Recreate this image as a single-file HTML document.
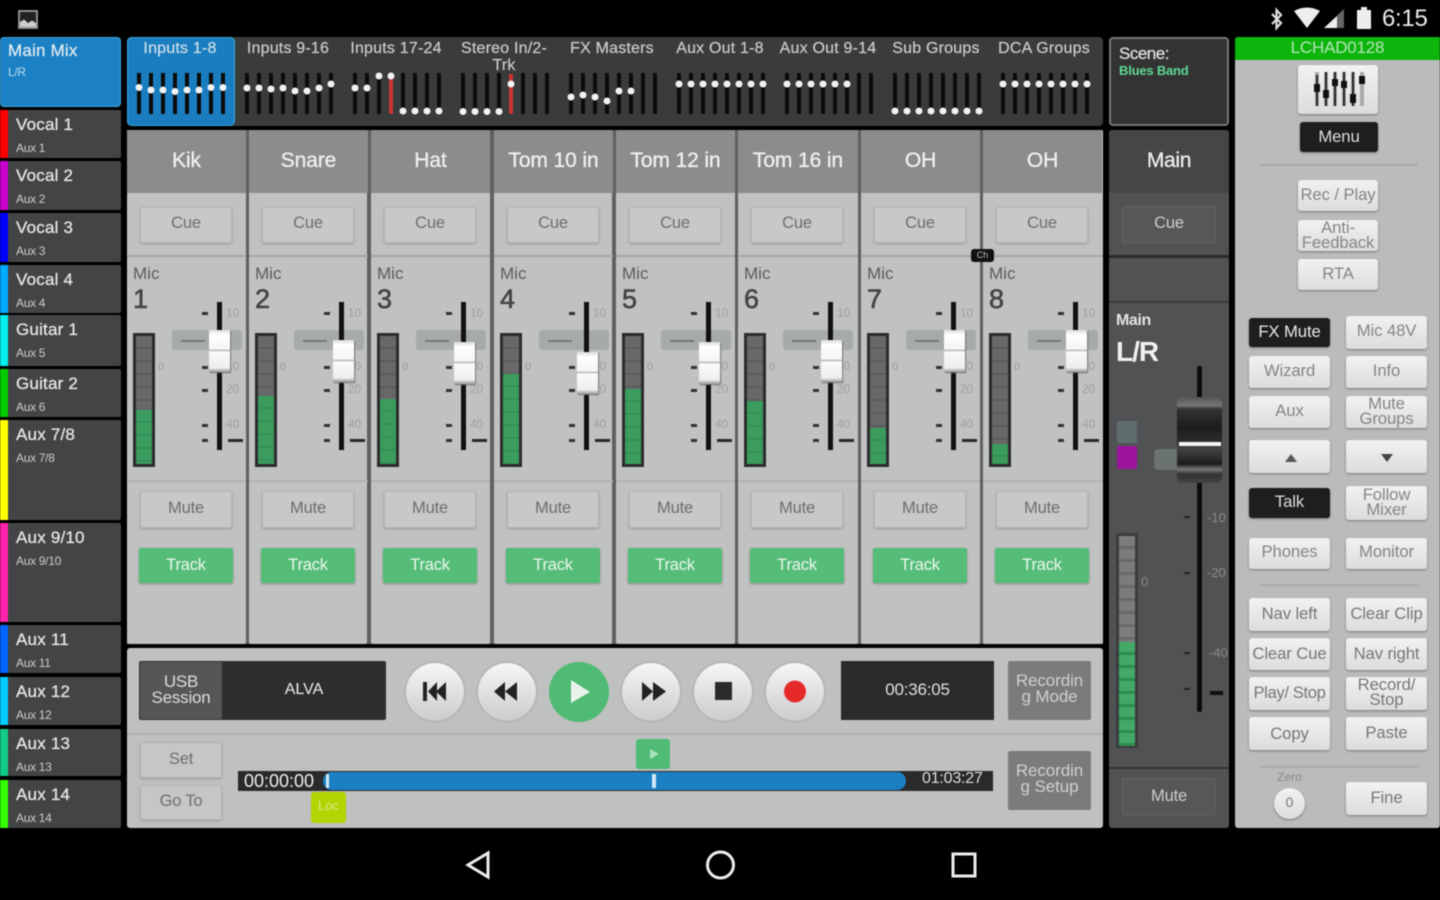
<!DOCTYPE html>
<html><head><meta charset="utf-8"><title>Mixer</title>
<style>
html,body{margin:0;padding:0;background:#000;width:1440px;height:900px;overflow:hidden}
#r{position:relative;width:1440px;height:900px;background:#000;overflow:hidden;font-family:"Liberation Sans",sans-serif;filter:blur(.6px)}
#r div,#r span,#r svg{position:absolute;box-sizing:border-box}
.s{left:0;width:121px;background:#434445;color:#ddd;border-radius:0 2px 2px 0}
.s i{position:absolute;left:0;top:0;bottom:0;width:8px}
.s b{position:absolute;left:16px;top:5px;font:17px/20px "Liberation Sans";letter-spacing:.2px;color:#e4e4e4;-webkit-text-stroke:.3px #e4e4e4;white-space:nowrap}
.s u{position:absolute;left:16px;top:31px;font:12px/14px "Liberation Sans";text-decoration:none;color:#ccc;letter-spacing:-.3px}
.t{top:40px;width:108px;text-align:center;font:16px/17px "Liberation Sans";letter-spacing:.2px;color:#ccc;white-space:nowrap;-webkit-text-stroke:.2px #ccc}
.ch{top:130px;width:119px;height:514px;background:#c0c1c1;border-radius:2px}
.hd{left:0;top:0;width:119px;height:63px;background:#8b8d8d;color:#f0f0f0;text-align:center;font:21px/62px "Liberation Sans";letter-spacing:-.1px;-webkit-text-stroke:.3px #f0f0f0;white-space:nowrap}
.b{text-align:center;color:#6e6e6e;font:16.5px/34px "Liberation Sans";background:#c8c8c8;border:1px solid #b4b4b4;border-radius:2px;box-shadow:0 1px 2px #999;letter-spacing:-.2px}
.cue{left:13px;top:77px;width:92px;height:36px;line-height:30px}
.mute{left:13px;top:361px;width:92px;height:37px;line-height:32px}
.trk{left:12px;top:418px;width:94px;height:35px;background:#55bd78;border:0;color:#ecf6ee;line-height:34px;box-shadow:0 1px 2px #888}
.ln{left:0;top:125px;width:119px;height:2px;background:#a4a5a5}
.ln2{left:0;top:350px;width:119px;height:2px;background:#b0b1b1}
.mic{left:6px;top:134px;font:17px/20px "Liberation Sans";color:#5c5c5c}
.num{left:6px;top:154px;font:27px/30px "Liberation Sans";color:#444;-webkit-text-stroke:.6px #444}
.mt{left:6px;top:203px;width:22px;height:134px;background:#2c2c2c;padding:0}
.mt i{position:absolute;left:3px;right:3px;top:3px;bottom:3px;background:repeating-linear-gradient(#686868 0 11px,#5c5c5c 11px 13px)}
.mt em{position:absolute;left:3px;right:3px;bottom:3px;background:repeating-linear-gradient(#3b9c5e 0 11px,#35905a 11px 13px)}
.z{left:31px;top:230px;font:11px/14px "Liberation Sans";color:#999}
.tk{left:75px;width:6px;height:3px;background:#333}
.l{left:99px;width:20px;text-align:left;font:12px/14px "Liberation Sans";color:#a0a0a0;letter-spacing:-.2px}
.dd{left:101px;top:309px;width:15px;height:3px;background:#2a2a2a}
.pill{left:45px;top:200px;width:70px;height:20px;background:#a6aaaa;border-radius:3px}
.dash{left:54px;top:210px;width:24px;height:2px;background:#777}
.tr{left:90px;top:172px;width:5px;height:148px;background:#111}
.cap{left:82px;width:21px;height:42px;background:linear-gradient(#ddd,#fff 12%,#f4f4f4 46%,#aaa 48%,#fafafa 52%,#eee 90%,#999);box-shadow:1px 1px 1px #777}
.rb{text-align:center;color:#858585;font:16.7px/30px "Liberation Sans";background:linear-gradient(#f2f2f2,#dcdcdc);border-radius:3px;box-shadow:0 1px 2px #777;letter-spacing:-.1px;white-space:nowrap}
.rb.k{background:#1e1e1e;color:#e8e8e8}
.rb.two{line-height:15px}
.c1{left:1249px;width:81px}.c2{left:1346px;width:81px}
.dv{left:1260px;width:158px;height:2px;background:#a8aaac}
.cr{top:663px;width:58px;height:58px;border-radius:50%;background:linear-gradient(#f6f6f6,#ccc);box-shadow:0 0 2px #888}
.rec{left:1008px;width:83px;height:59px;background:#7a7b7b;border-radius:2px;color:#cfcfcf;text-align:center;font:17px/16px "Liberation Sans";padding-top:12px;letter-spacing:-.1px}
</style></head><body><div id="r">

<!-- status bar -->
<svg style="left:18px;top:10px" width="20" height="19" viewBox="0 0 20 19"><rect x="1" y="1" width="18" height="17" fill="#222" stroke="#aaa" stroke-width="1.6"/><path d="M2 16V12L6 9.500L10 13L14 10.500L18 13V17H2Z" fill="#ccc"/></svg>
<svg style="left:1268px;top:7px" width="18" height="24" viewBox="0 0 18 24"><path d="M4 7L13 16L8.500 21V3L13 8L4 17" fill="none" stroke="#ddd" stroke-width="2.200"/></svg>
<svg style="left:1293px;top:7px" width="30" height="22" viewBox="0 0 30 22"><path d="M1 4Q14 -3 27 4L14 21Z" fill="#eee"/></svg>
<svg style="left:1323px;top:8px" width="23" height="21" viewBox="0 0 23 21"><path d="M1 20L21 1V20Z" fill="#666"/><path d="M1 20L14 8V20Z" fill="#eee"/></svg>
<svg style="left:1355px;top:6px" width="18" height="24" viewBox="0 0 18 24"><path d="M2 4H6V1H12V4H16V23H2Z" fill="#eee"/></svg>
<span style="left:1382px;top:5px;font:24px/28px 'Liberation Sans';color:#e8e8e8;letter-spacing:-.3px">6:15</span>

<!-- sidebar -->
<div class="s" style="top:37px;height:70px;background:#1b80c4;border:1px solid #3aa6dc;border-radius:4px"><b style="left:7px;top:3px;color:#d8ecf6">Main Mix</b><u style="left:7px;top:27px;color:#b8dcf0">L/R</u></div>
<div class="s" style="top:110px;height:48px"><i style="background:#f00"></i><b>Vocal 1</b><u>Aux 1</u></div>
<div class="s" style="top:161px;height:49px"><i style="background:#c0c"></i><b>Vocal 2</b><u>Aux 2</u></div>
<div class="s" style="top:213px;height:49px"><i style="background:#00f"></i><b>Vocal 3</b><u>Aux 3</u></div>
<div class="s" style="top:265px;height:48px"><i style="background:#0af"></i><b>Vocal 4</b><u>Aux 4</u></div>
<div class="s" style="top:315px;height:51px"><i style="background:#0ee"></i><b>Guitar 1</b><u>Aux 5</u></div>
<div class="s" style="top:369px;height:48px"><i style="background:#0c0"></i><b>Guitar 2</b><u>Aux 6</u></div>
<div class="s" style="top:420px;height:100px"><i style="background:#ff0"></i><b>Aux 7/8</b><u>Aux 7/8</u></div>
<div class="s" style="top:523px;height:99px"><i style="background:#f2a"></i><b>Aux 9/10</b><u>Aux 9/10</u></div>
<div class="s" style="top:625px;height:48px"><i style="background:#06f"></i><b>Aux 11</b><u>Aux 11</u></div>
<div class="s" style="top:677px;height:48px"><i style="background:#0cf"></i><b>Aux 12</b><u>Aux 12</u></div>
<div class="s" style="top:729px;height:47px"><i style="background:#1c8"></i><b>Aux 13</b><u>Aux 13</u></div>
<div class="s" style="top:780px;height:48px"><i style="background:#3f0"></i><b>Aux 14</b><u>Aux 14</u></div>

<!-- top strip -->
<div style="left:127px;top:37px;width:976px;height:89px;background:#3a3b3b;border-radius:4px"></div>
<div style="left:127px;top:37px;width:108px;height:89px;background:#1a7dc0;border:1px solid #3aa6dc;border-radius:5px"></div>
<div class="t" style="left:126px;color:#cfe6f4">Inputs 1-8</div>
<div class="t" style="left:234px">Inputs 9-16</div>
<div class="t" style="left:342px">Inputs 17-24</div>
<div class="t" style="left:450px">Stereo In/2-<br>Trk</div>
<div class="t" style="left:558px">FX Masters</div>
<div class="t" style="left:666px">Aux Out 1-8</div>
<div class="t" style="left:774px">Aux Out 9-14</div>
<div class="t" style="left:882px">Sub Groups</div>
<div class="t" style="left:990px">DCA Groups</div>
<svg style="left:127px;top:60px" width="976" height="60" viewBox="127 60 976 60">
<g stroke="#0b0b0b" stroke-width="4">
<path d="M139 73V114M151 73V114M163 73V114M175 73V114M187 73V114M199 73V114M211 73V114M223 73V114"/>
<path d="M247 73V114M259 73V114M271 73V114M283 73V114M295 73V114M307 73V114M319 73V114M331 73V114"/>
<path d="M355 73V114M367 73V114M379 73V114M403 73V114M415 73V114M427 73V114M439 73V114"/>
<path d="M463 73V114M475 73V114M487 73V114M499 73V114M523 73V114M535 73V114M547 73V114"/>
<path d="M571 73V114M583 73V114M595 73V114M607 73V114M619 73V114M631 73V114M643 73V114M655 73V114"/>
<path d="M679 73V114M691 73V114M703 73V114M715 73V114M727 73V114M739 73V114M751 73V114M763 73V114"/>
<path d="M787 73V114M799 73V114M811 73V114M823 73V114M835 73V114M847 73V114M859 73V114M871 73V114"/>
<path d="M895 73V114M907 73V114M919 73V114M931 73V114M943 73V114M955 73V114M967 73V114M979 73V114"/>
<path d="M1003 73V114M1015 73V114M1027 73V114M1039 73V114M1051 73V114M1063 73V114M1075 73V114M1087 73V114"/>
</g>
<path d="M391 74V114M511 74V114" stroke="#c33" stroke-width="4"/>
<g fill="#f2f2f2">
<circle cx="139" cy="87.500" r="3.500"/><circle cx="151" cy="90" r="3.500"/><circle cx="163" cy="90" r="3.500"/><circle cx="175" cy="91.500" r="3.500"/><circle cx="187" cy="90" r="3.500"/><circle cx="199" cy="90" r="3.500"/><circle cx="211" cy="87.500" r="3.500"/><circle cx="223" cy="87.500" r="3.500"/>
<circle cx="247" cy="88" r="3.500"/><circle cx="259" cy="88" r="3.500"/><circle cx="271" cy="89" r="3.500"/><circle cx="283" cy="88" r="3.500"/><circle cx="295" cy="91" r="3.500"/><circle cx="307" cy="91" r="3.500"/><circle cx="319" cy="88" r="3.500"/><circle cx="331" cy="84" r="3.500"/>
<circle cx="355" cy="88" r="3.500"/><circle cx="367" cy="88" r="3.500"/><circle cx="379" cy="76" r="3.500"/><circle cx="391" cy="76" r="3.500"/><circle cx="403" cy="111" r="3.500"/><circle cx="415" cy="111" r="3.500"/><circle cx="427" cy="111" r="3.500"/><circle cx="439" cy="111" r="3.500"/>
<circle cx="463" cy="111.500" r="3.500"/><circle cx="475" cy="111.500" r="3.500"/><circle cx="487" cy="111.500" r="3.500"/><circle cx="499" cy="111.500" r="3.500"/><circle cx="511" cy="84" r="3.500"/>
<circle cx="571" cy="97" r="3.500"/><circle cx="583" cy="95" r="3.500"/><circle cx="595" cy="97" r="3.500"/><circle cx="607" cy="101" r="3.500"/><circle cx="619" cy="91" r="3.500"/><circle cx="631" cy="91" r="3.500"/>
<circle cx="679" cy="84" r="3.500"/><circle cx="691" cy="84" r="3.500"/><circle cx="703" cy="84" r="3.500"/><circle cx="715" cy="84" r="3.500"/><circle cx="727" cy="84" r="3.500"/><circle cx="739" cy="84" r="3.500"/><circle cx="751" cy="84" r="3.500"/><circle cx="763" cy="84" r="3.500"/>
<circle cx="787" cy="84" r="3.500"/><circle cx="799" cy="84" r="3.500"/><circle cx="811" cy="84" r="3.500"/><circle cx="823" cy="84" r="3.500"/><circle cx="835" cy="84" r="3.500"/><circle cx="847" cy="84" r="3.500"/>
<circle cx="895" cy="111" r="3.500"/><circle cx="907" cy="111" r="3.500"/><circle cx="919" cy="111" r="3.500"/><circle cx="931" cy="111" r="3.500"/><circle cx="943" cy="111" r="3.500"/><circle cx="955" cy="111" r="3.500"/><circle cx="967" cy="111" r="3.500"/><circle cx="979" cy="111" r="3.500"/>
<circle cx="1003" cy="84" r="3.500"/><circle cx="1015" cy="84" r="3.500"/><circle cx="1027" cy="84" r="3.500"/><circle cx="1039" cy="84" r="3.500"/><circle cx="1051" cy="84" r="3.500"/><circle cx="1063" cy="84" r="3.500"/><circle cx="1075" cy="84" r="3.500"/><circle cx="1087" cy="84" r="3.500"/>
</g></svg>

<!-- channels backdrop separators -->
<div style="left:127px;top:130px;width:976px;height:514px;background:#5f6060"></div>

<div class="ch" style="left:127px"><div class="hd">Kik</div><div class="b cue">Cue</div><div class="ln"></div><div class="mic">Mic</div><div class="num">1</div><div class="mt"><i></i><em style="height:54px"></em></div><div class="z">0</div>
<div class="tk" style="top:182px"></div><div class="tk" style="top:236px"></div><div class="tk" style="top:259px"></div><div class="tk" style="top:294px"></div><div class="tk" style="top:309px"></div>
<div class="l" style="top:176px">10</div><div class="l" style="top:203px">U</div><div class="l" style="top:229px">10</div><div class="l" style="top:252px">20</div><div class="l" style="top:287px">40</div><div class="dd"></div>
<div class="pill"></div><div class="dash"></div><div class="tr"></div><div class="cap" style="top:200px"></div><div class="ln2"></div><div class="b mute">Mute</div><div class="b trk">Track</div></div>

<div class="ch" style="left:249px;width:118px"><div class="hd">Snare</div><div class="b cue">Cue</div><div class="ln"></div><div class="mic">Mic</div><div class="num">2</div><div class="mt"><i></i><em style="height:68px"></em></div><div class="z">0</div>
<div class="tk" style="top:182px"></div><div class="tk" style="top:236px"></div><div class="tk" style="top:259px"></div><div class="tk" style="top:294px"></div><div class="tk" style="top:309px"></div>
<div class="l" style="top:176px">10</div><div class="l" style="top:203px">U</div><div class="l" style="top:229px">10</div><div class="l" style="top:252px">20</div><div class="l" style="top:287px">40</div><div class="dd"></div>
<div class="pill"></div><div class="dash"></div><div class="tr"></div><div class="cap" style="top:210px;left:84px"></div><div class="ln2"></div><div class="b mute">Mute</div><div class="b trk">Track</div></div>

<div class="ch" style="left:371px"><div class="hd">Hat</div><div class="b cue">Cue</div><div class="ln"></div><div class="mic">Mic</div><div class="num">3</div><div class="mt"><i></i><em style="height:65px"></em></div><div class="z">0</div>
<div class="tk" style="top:182px"></div><div class="tk" style="top:236px"></div><div class="tk" style="top:259px"></div><div class="tk" style="top:294px"></div><div class="tk" style="top:309px"></div>
<div class="l" style="top:176px">10</div><div class="l" style="top:203px">U</div><div class="l" style="top:229px">10</div><div class="l" style="top:252px">20</div><div class="l" style="top:287px">40</div><div class="dd"></div>
<div class="pill"></div><div class="dash"></div><div class="tr"></div><div class="cap" style="top:212px;left:83px"></div><div class="ln2"></div><div class="b mute">Mute</div><div class="b trk">Track</div></div>

<div class="ch" style="left:494px;width:118px"><div class="hd">Tom 10 in</div><div class="b cue">Cue</div><div class="ln"></div><div class="mic">Mic</div><div class="num">4</div><div class="mt"><i></i><em style="height:90px"></em></div><div class="z">0</div>
<div class="tk" style="top:182px"></div><div class="tk" style="top:236px"></div><div class="tk" style="top:259px"></div><div class="tk" style="top:294px"></div><div class="tk" style="top:309px"></div>
<div class="l" style="top:176px">10</div><div class="l" style="top:203px">U</div><div class="l" style="top:229px">10</div><div class="l" style="top:252px">20</div><div class="l" style="top:287px">40</div><div class="dd"></div>
<div class="pill"></div><div class="dash"></div><div class="tr"></div><div class="cap" style="top:222px;left:83px"></div><div class="ln2"></div><div class="b mute">Mute</div><div class="b trk">Track</div></div>

<div class="ch" style="left:616px"><div class="hd">Tom 12 in</div><div class="b cue">Cue</div><div class="ln"></div><div class="mic">Mic</div><div class="num">5</div><div class="mt"><i></i><em style="height:75px"></em></div><div class="z">0</div>
<div class="tk" style="top:182px"></div><div class="tk" style="top:236px"></div><div class="tk" style="top:259px"></div><div class="tk" style="top:294px"></div><div class="tk" style="top:309px"></div>
<div class="l" style="top:176px">10</div><div class="l" style="top:203px">U</div><div class="l" style="top:229px">10</div><div class="l" style="top:252px">20</div><div class="l" style="top:287px">40</div><div class="dd"></div>
<div class="pill"></div><div class="dash"></div><div class="tr"></div><div class="cap" style="top:212px;left:83px"></div><div class="ln2"></div><div class="b mute">Mute</div><div class="b trk">Track</div></div>

<div class="ch" style="left:738px;width:120px"><div class="hd" style="width:120px">Tom 16 in</div><div class="b cue">Cue</div><div class="ln" style="width:120px"></div><div class="mic">Mic</div><div class="num">6</div><div class="mt"><i></i><em style="height:63px"></em></div><div class="z">0</div>
<div class="tk" style="top:182px"></div><div class="tk" style="top:236px"></div><div class="tk" style="top:259px"></div><div class="tk" style="top:294px"></div><div class="tk" style="top:309px"></div>
<div class="l" style="top:176px">10</div><div class="l" style="top:203px">U</div><div class="l" style="top:229px">10</div><div class="l" style="top:252px">20</div><div class="l" style="top:287px">40</div><div class="dd"></div>
<div class="pill"></div><div class="dash"></div><div class="tr"></div><div class="cap" style="top:210px;left:83px"></div><div class="ln2" style="width:120px"></div><div class="b mute">Mute</div><div class="b trk">Track</div></div>

<div class="ch" style="left:861px"><div class="hd">OH</div><div class="b cue">Cue</div><div class="ln"></div><div class="mic">Mic</div><div class="num">7</div><div class="mt"><i></i><em style="height:36px"></em></div><div class="z">0</div>
<div class="tk" style="top:182px"></div><div class="tk" style="top:236px"></div><div class="tk" style="top:259px"></div><div class="tk" style="top:294px"></div><div class="tk" style="top:309px"></div>
<div class="l" style="top:176px">10</div><div class="l" style="top:203px">U</div><div class="l" style="top:229px">10</div><div class="l" style="top:252px">20</div><div class="l" style="top:287px">40</div><div class="dd"></div>
<div class="pill"></div><div class="dash"></div><div class="tr"></div><div class="cap" style="top:200px;left:83px"></div><div class="ln2"></div><div class="b mute">Mute</div><div class="b trk">Track</div></div>

<div class="ch" style="left:983px;width:120px"><div class="hd">OH</div><div class="b cue">Cue</div><div class="ln" style="width:120px"></div><div class="mic">Mic</div><div class="num">8</div><div class="mt"><i></i><em style="height:20px"></em></div><div class="z">0</div>
<div class="tk" style="top:182px"></div><div class="tk" style="top:236px"></div><div class="tk" style="top:259px"></div><div class="tk" style="top:294px"></div><div class="tk" style="top:309px"></div>
<div class="l" style="top:176px">10</div><div class="l" style="top:203px">U</div><div class="l" style="top:229px">10</div><div class="l" style="top:252px">20</div><div class="l" style="top:287px">40</div><div class="dd"></div>
<div class="pill"></div><div class="dash"></div><div class="tr"></div><div class="cap" style="top:200px;left:83px"></div><div class="ln2" style="width:120px"></div><div class="b mute">Mute</div><div class="b trk">Track</div></div>

<div style="left:971px;top:249px;width:23px;height:13px;background:#111;border-radius:3px;color:#bbb;font:9px/13px 'Liberation Sans';text-align:center">Ch</div>

<!-- transport -->
<div style="left:127px;top:648px;width:976px;height:180px;background:#bfc0c0;border-radius:3px"></div>
<div style="left:127px;top:733px;width:976px;height:2px;background:#aeafaf"></div>
<div style="left:139px;top:661px;width:247px;height:59px;background:#2e2e2e;border-radius:2px"></div>
<div style="left:140px;top:662px;width:82px;height:57px;background:#565656;color:#ddd;text-align:center;font:17px/16px 'Liberation Sans';padding-top:12px;letter-spacing:-.2px">USB<br>Session</div>
<div style="left:222px;top:661px;width:164px;height:59px;color:#eee;text-align:center;font:16px/57px 'Liberation Sans'">ALVA</div>
<div class="cr" style="left:406px"></div><div class="cr" style="left:478px"></div><div class="cr" style="left:622px"></div><div class="cr" style="left:694px"></div><div class="cr" style="left:766px"></div>
<div style="left:549px;top:662px;width:60px;height:60px;border-radius:50%;background:#4fbb74"></div>
<svg style="left:400px;top:660px" width="420" height="64" viewBox="400 660 420 64">
<path d="M423 682H427V701H423ZM428 691.500L437 682V701ZM436 691.500L446 682V701Z" fill="#222"/>
<path d="M494 691.500L505 682V701ZM505 691.500L517 682V701Z" fill="#222"/>
<path d="M571 680L590 692L571 703Z" fill="#e8f4ea"/>
<path d="M642 682L653 691.500L642 701ZM653 682L666 691.500L653 701Z" fill="#222"/>
<rect x="715" y="682" width="17" height="18" fill="#2a2a2a"/>
<circle cx="795" cy="691.500" r="11" fill="#e62a2a"/></svg>
<div style="left:841px;top:661px;width:153px;height:59px;background:#2b2b2b;color:#e0e0e0;text-align:center;font:17px/57px 'Liberation Sans';letter-spacing:-.2px">00:36:05</div>
<div class="rec" style="top:661px">Recordin<br>g Mode</div>
<div class="rec" style="top:751px">Recordin<br>g Setup</div>
<div class="b" style="left:140px;top:742px;width:82px;height:36px;background:#c6c6c6;line-height:32px">Set</div>
<div class="b" style="left:140px;top:785px;width:82px;height:35px;background:#c6c6c6;line-height:30px">Go To</div>
<div style="left:238px;top:771px;width:755px;height:20px;background:#2a2a2a"></div>
<div style="left:323px;top:772px;width:583px;height:18px;background:#1b7fc4;border-radius:9px"></div>
<div style="left:244px;top:771px;font:18px/20px 'Liberation Sans';color:#eee;letter-spacing:0">00:00:00</div>
<div style="left:922px;top:771px;font:16px/16px 'Liberation Sans';color:#ddd;letter-spacing:-.2px">01:03:27</div>
<div style="left:326px;top:774px;width:3px;height:14px;background:#cfe8f6"></div>
<div style="left:652px;top:774px;width:4px;height:14px;background:#cfe8f6"></div>
<div style="left:311px;top:792px;width:35px;height:31px;background:#b2d400;border-radius:3px;color:#d8e88a;text-align:center;font:13px/28px 'Liberation Sans'">Loc</div>
<div style="left:636px;top:739px;width:34px;height:30px;background:#4fbb74;border-radius:3px"></div>
<svg style="left:636px;top:739px" width="34" height="30" viewBox="0 0 34 30"><path d="M14 10L23 15L14 20Z" fill="#a8e0bb"/></svg>

<!-- main strip -->
<div style="left:1109px;top:37px;width:120px;height:89px;background:#333;border:2px solid #777;border-radius:4px"></div>
<div style="left:1119px;top:45px;font:17px/18px 'Liberation Sans';color:#ddd;letter-spacing:-.5px;-webkit-text-stroke:.3px #ddd">Scene:</div>
<div style="left:1119px;top:64px;font:bold 13px/14px 'Liberation Sans';color:#5fd893;letter-spacing:-.2px">Blues Band</div>
<div style="left:1109px;top:130px;width:120px;height:698px;background:#505254;border-radius:3px"></div>
<div style="left:1109px;top:130px;width:120px;height:63px;background:#454648;border-radius:3px 3px 0 0;color:#eee;text-align:center;font:21px/62px 'Liberation Sans';letter-spacing:-.3px;-webkit-text-stroke:.3px #eee">Main</div>
<div style="left:1109px;top:255px;width:120px;height:3px;background:#2c2c2c"></div>
<div style="left:1109px;top:301px;width:120px;height:2px;background:#3a3a3a"></div>
<div style="left:1109px;top:767px;width:120px;height:2px;background:#333"></div>
<div class="b" style="left:1122px;top:206px;width:94px;height:37px;background:#565759;border-color:#626365;box-shadow:none;color:#ccc;line-height:32px">Cue</div>
<div class="b" style="left:1122px;top:778px;width:94px;height:37px;background:#565759;border-color:#626365;box-shadow:none;color:#ccc;line-height:35px">Mute</div>
<div style="left:1116px;top:312px;font:bold 16px/18px 'Liberation Sans';color:#e4e4e4;letter-spacing:-.4px">Main</div>
<div style="left:1116px;top:336px;font:bold 28px/32px 'Liberation Sans';color:#f0f0f0;letter-spacing:-1px">L/R</div>
<div style="left:1117px;top:421px;width:20px;height:22px;background:#5f6d6f;border-radius:2px"></div>
<div style="left:1117px;top:446px;width:20px;height:23px;background:#9c149c;border-radius:2px"></div>
<div style="left:1154px;top:449px;width:26px;height:21px;background:#6a7272;border-radius:4px"></div>
<div style="left:1116px;top:533px;width:22px;height:215px;background:#3c3d3e"></div>
<div style="left:1119px;top:536px;width:16px;height:206px;background:repeating-linear-gradient(#7c7c7c 0 10px,#6a6a6a 10px 13px)"></div>
<div style="left:1119px;top:642px;width:16px;height:104px;background:repeating-linear-gradient(#43a868 0 10px,#2f8c50 10px 13px)"></div>
<div style="left:1141px;top:575px;font:13px/14px 'Liberation Sans';color:#888">0</div>
<div style="left:1197px;top:366px;width:5px;height:346px;background:#0c0c0c;border-radius:2px"></div>
<div style="left:1184px;top:516px;width:6px;height:2px;background:#222"></div><div style="left:1184px;top:572px;width:6px;height:2px;background:#222"></div><div style="left:1184px;top:652px;width:6px;height:2px;background:#222"></div><div style="left:1184px;top:688px;width:6px;height:2px;background:#222"></div>
<div style="left:1207px;top:511px;font:13px/14px 'Liberation Sans';color:#8a8a8a">-10</div>
<div style="left:1207px;top:566px;font:13px/14px 'Liberation Sans';color:#8a8a8a">-20</div>
<div style="left:1209px;top:646px;font:13px/14px 'Liberation Sans';color:#8a8a8a">-40</div>
<div style="left:1210px;top:691px;width:13px;height:4px;background:#111"></div>
<div style="left:1177px;top:397px;width:45px;height:86px;background:linear-gradient(#555 0,#777 10%,#333 14%,#1c1c1c 35%,#2a2a2a 50%,#444 60%,#1c1c1c 78%,#777 84%,#333 90%,#444);border-radius:5px"></div>
<div style="left:1179px;top:442px;width:42px;height:4px;background:#f4f4f4"></div>

<!-- right panel -->
<div style="left:1235px;top:37px;width:205px;height:791px;background:#b9bbbd;border-radius:3px"></div>
<div style="left:1235px;top:37px;width:205px;height:23px;background:#0cb40c;border-radius:3px 0 0 0;color:#b6e6b6;text-align:center;font:17px/21px 'Liberation Sans';letter-spacing:-.2px">LCHAD0128</div>
<div class="rb" style="left:1298px;top:65px;width:80px;height:49px"></div>
<svg style="left:1312px;top:70px" width="54" height="38" viewBox="0 0 54 38"><g stroke="#a8a8a8" stroke-width="4"><path d="M5 2V36M14 2V36M23 2V36M32 2V36M41 2V36M50 2V36"/></g><g stroke="#222" stroke-width="2"><path d="M5 5V36M14 2V36M23 2V36M32 2V36M41 2V36"/></g><g fill="#111"><rect x="2" y="14" width="6" height="8"/><rect x="11" y="20" width="6" height="8"/><rect x="20" y="9" width="6" height="7"/><rect x="29" y="11" width="6" height="7"/><rect x="38" y="24" width="6" height="9"/><rect x="47" y="6" width="6" height="8"/></g></svg>
<div class="rb k" style="left:1300px;top:122px;width:78px;height:30px;line-height:30px;color:#ddd">Menu</div>
<div class="dv" style="top:164px"></div>
<div class="rb" style="left:1298px;top:180px;width:80px;height:31px">Rec / Play</div>
<div class="rb two" style="left:1298px;top:220px;width:80px;height:31px;padding-top:0">Anti-<br>Feedback</div>
<div class="rb" style="left:1298px;top:259px;width:80px;height:31px">RTA</div>
<div class="rb k c1" style="top:318px;height:29px;line-height:27px">FX Mute</div>
<div class="rb c2" style="top:316px;height:33px">Mic 48V</div>
<div class="rb c1" style="top:356px;height:32px">Wizard</div>
<div class="rb c2" style="top:356px;height:32px">Info</div>
<div class="rb c1" style="top:396px;height:32px">Aux</div>
<div class="rb two c2" style="top:396px;height:32px">Mute<br>Groups</div>
<div class="rb c1" style="top:440px;height:33px"></div>
<div class="rb c2" style="top:440px;height:33px"></div>
<svg style="left:1284px;top:451px" width="110" height="12" viewBox="0 0 110 12"><path d="M1 11L7 3L13 11Z" fill="#555"/><path d="M97 3H109L103 11Z" fill="#444"/></svg>
<div class="rb k c1" style="top:488px;height:30px;line-height:28px;color:#ddd">Talk</div>
<div class="rb two c2" style="top:486px;height:34px;padding-top:1px">Follow<br>Mixer</div>
<div class="rb c1" style="top:538px;height:31px;line-height:27px">Phones</div>
<div class="rb c2" style="top:538px;height:31px;line-height:27px">Monitor</div>
<div class="dv" style="top:584px"></div>
<div class="rb c1" style="top:598px;height:33px;line-height:32px;color:#777">Nav left</div>
<div class="rb c2" style="top:598px;height:33px;line-height:32px;color:#777">Clear Clip</div>
<div class="rb c1" style="top:638px;height:32px;line-height:32px;color:#777">Clear Cue</div>
<div class="rb c2" style="top:638px;height:32px;line-height:32px;color:#777">Nav right</div>
<div class="rb c1" style="top:677px;height:33px;line-height:32px;color:#777;letter-spacing:-.4px">Play/ Stop</div>
<div class="rb two c2" style="top:677px;height:33px;color:#777">Record/<br>Stop</div>
<div class="rb c1" style="top:717px;height:33px;line-height:33px;color:#777">Copy</div>
<div class="rb c2" style="top:717px;height:33px;line-height:32px;color:#777">Paste</div>
<div class="dv" style="top:766px"></div>
<div style="left:1249px;top:770px;width:81px;text-align:center;font:12px/14px 'Liberation Sans';color:#888">Zero</div>
<div class="rb" style="left:1274px;top:788px;width:31px;height:31px;border-radius:50%;color:#777;font-size:14px;line-height:29px">0</div>
<div class="rb c2" style="top:782px;height:33px;line-height:32px;color:#777">Fine</div>

<!-- nav bar -->
<svg style="left:460px;top:845px" width="520" height="40" viewBox="460 845 520 40" fill="none" stroke="#ececec" stroke-width="3"><path d="M488 853V877L468 865Z"/><circle cx="720.500" cy="865" r="13"/><rect x="953" y="854" width="22" height="22"/></svg>
</div></body></html>
